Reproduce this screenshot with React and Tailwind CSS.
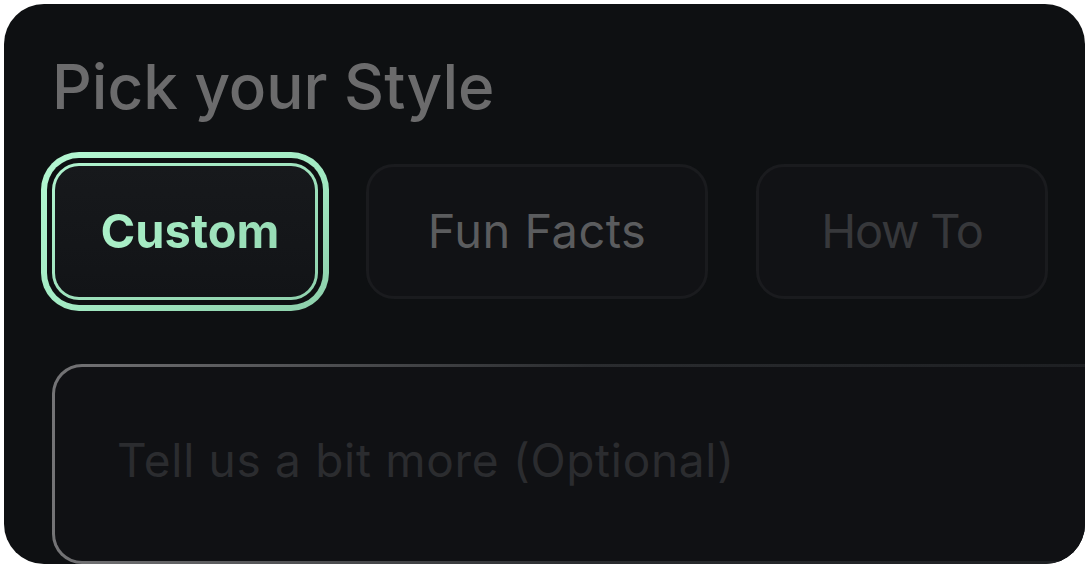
import React from 'react';

const font = { fontFamily: 'Inter, "Noto Sans", sans-serif' };

function StyleOption({ label, active, tone }) {
    if (active) {
        return (
            <div className="-mx-[11px] rounded-[38px] bg-gradient-to-br from-[#b4f7d2] via-[#a4ecc5] to-[#8ccfaa] p-[6px]">
                <div className="rounded-[32px] bg-[#0e1012] p-[5px]">
                    <div className="rounded-[27px] bg-gradient-to-br from-[#b0f4cf] to-[#8fd2ad] p-[3px]">
                        <div className="flex h-[131px] w-[260px] items-center justify-center rounded-[24px] bg-gradient-to-b from-[#17191c] to-[#121417] pl-[10px]">
                            <span className="bg-gradient-to-r from-[#aaf0c8] to-[#98dcb6] bg-clip-text text-[47px] font-bold text-transparent">
                                {label}
                            </span>
                        </div>
                    </div>
                </div>
            </div>
        );
    }
    return (
        <div className={`flex h-[135px] items-center justify-center rounded-[28px] border-[3px] border-[#1a1b1e] bg-[#111215] ${tone.w}`}>
            <span className={`text-[47px] ${tone.text}`}>{label}</span>
        </div>
    );
}

export default function App() {
    return (
        <div className="h-[568px] w-[1089px] bg-white p-[4px]" style={font}>
            <div className="flex h-[560px] w-[1081px] flex-col overflow-hidden rounded-[40px] bg-[#0e1012] pl-[48px]">
                <h1 className="mt-[52px] text-[62px] font-medium leading-none text-[#6b6b6c]">
                    Pick your Style
                </h1>

                <div className="mt-[34px] flex items-center gap-12">
                    <StyleOption label="Custom" active />
                    <StyleOption label="Fun Facts" tone={{ w: 'w-[342px]', text: 'text-[#5b5c5e] tracking-[0.01em]' }} />
                    <StyleOption label="How To" tone={{ w: 'w-[292px]', text: 'text-[#37383b] tracking-tight' }} />
                </div>

                <div className="mt-[53px] h-[260px] w-[1080px] rounded-[30px] bg-gradient-to-r from-[#747476] via-[#2a2c2f] to-[#1c1e21] p-[3px]">
                    <div className="h-full w-full rounded-[27px] bg-[#101114] px-[62px] pt-[70px]">
                        <p className="text-[46px] leading-none tracking-[0.015em] text-[#2b2c2f]">Tell us a bit more (Optional)</p>
                    </div>
                </div>
            </div>
        </div>
    );
}
